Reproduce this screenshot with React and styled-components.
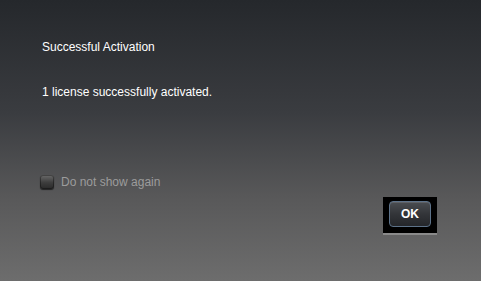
import React from "react";
import styled, { createGlobalStyle } from "styled-components";

const GlobalStyle = createGlobalStyle`
  html, body {
    margin: 0;
    padding: 0;
    width: 481px;
    height: 281px;
    overflow: hidden;
  }
`;

const Dialog = styled.div`
  width: 481px;
  height: 281px;
  box-sizing: border-box;
  padding: 39px 0 0 42px;
  background: linear-gradient(180deg, #25282c 0%, #3a3c40 40%, #585859 70%, #6d6d6d 100%);
  font-family: "Liberation Sans", Arial, sans-serif;
  font-size: 12px;
  color: #ffffff;
  display: flex;
  flex-direction: column;
`;

const Title = styled.div`
  line-height: 16px;
  height: 16px;
`;

const Message = styled.div`
  margin-top: 29px;
  line-height: 16px;
`;

const CheckRow = styled.label`
  margin-top: 74px;
  margin-left: -2px;
  display: flex;
  align-items: center;
  gap: 7px;
  color: #9c9c9c;
  line-height: 16px;
`;

const Box = styled.span`
  width: 14px;
  height: 14px;
  border-radius: 3px;
  background: linear-gradient(180deg, #6a6a6a 0%, #3c3c3c 55%, #2a2a2a 100%);
  box-shadow: 0 1px 1px rgba(0, 0, 0, 0.6), inset 0 0 0 1px rgba(0, 0, 0, 0.35);
`;

const Footer = styled.div`
  display: flex;
  justify-content: flex-end;
  padding-right: 44px;
  margin-top: 7px;
`;

const ButtonFrame = styled.div`
  width: 54px;
  height: 38px;
  box-sizing: border-box;
  padding: 4px 6px 6px 6px;
  background: #000;
  border-bottom: 2px solid #8a8a8a;
`;

const OkButton = styled.button`
  width: 42px;
  height: 26px;
  padding: 0;
  border: 1px solid #5d7289;
  border-radius: 4px;
  background: linear-gradient(180deg, #4a4d51 0%, #333539 50%, #24262a 100%);
  color: #fff;
  font-family: "Liberation Sans", Arial, sans-serif;
  font-size: 12px;
  font-weight: bold;
  box-shadow: inset 0 1px 0 rgba(255, 255, 255, 0.12);
`;

export default function App() {
  return (
    <>
      <GlobalStyle />
      <Dialog>
        <Title>Successful Activation</Title>
        <Message>1 license successfully activated.</Message>
        <CheckRow>
          <Box />
          Do not show again
        </CheckRow>
        <Footer>
          <ButtonFrame>
            <OkButton>OK</OkButton>
          </ButtonFrame>
        </Footer>
      </Dialog>
    </>
  );
}
